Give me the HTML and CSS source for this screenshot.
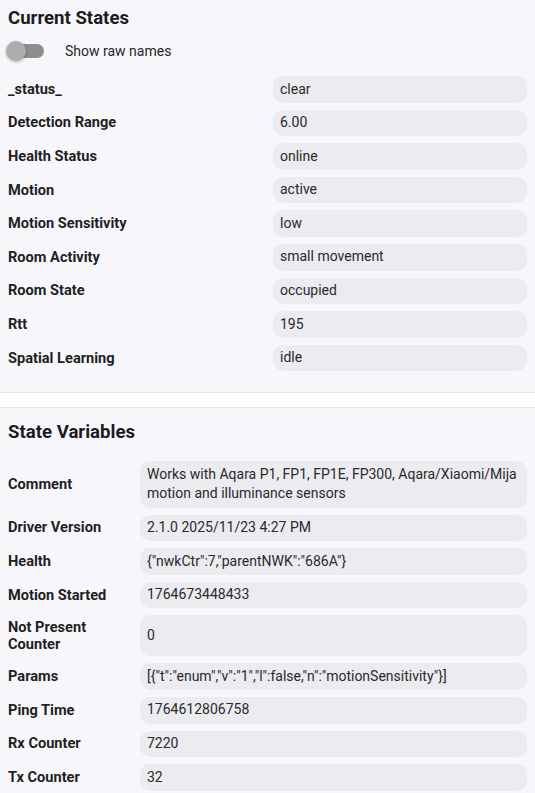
FILE: index.html
```html
<!DOCTYPE html>
<html>
<head>
<meta charset="utf-8">
<link rel="stylesheet" href="styles.css">
</head>
<body>
<section class="panel panel-states">
  <h2 class="title">Current States</h2>
  <div class="toggle-row">
    <span class="switch"><span class="track"></span><span class="knob"></span></span>
    <span class="toggle-label">Show raw names</span>
  </div>
  <div class="grid grid-states">
    <div class="label">_status_</div><div class="value">clear</div>
    <div class="label">Detection Range</div><div class="value">6.00</div>
    <div class="label">Health Status</div><div class="value">online</div>
    <div class="label">Motion</div><div class="value">active</div>
    <div class="label">Motion Sensitivity</div><div class="value">low</div>
    <div class="label">Room Activity</div><div class="value">small movement</div>
    <div class="label">Room State</div><div class="value">occupied</div>
    <div class="label">Rtt</div><div class="value">195</div>
    <div class="label">Spatial Learning</div><div class="value">idle</div>
  </div>
</section>
<div class="spacer"></div>
<section class="panel panel-vars">
  <h2 class="title">State Variables</h2>
  <div class="grid grid-vars">
    <div class="label">Comment</div><div class="value">Works with Aqara P1, FP1, FP1E, FP300, Aqara/Xiaomi/Mija motion and illuminance sensors</div>
    <div class="label">Driver Version</div><div class="value">2.1.0 2025/11/23 4:27 PM</div>
    <div class="label">Health</div><div class="value">{"nwkCtr":7,"parentNWK":"686A"}</div>
    <div class="label">Motion Started</div><div class="value">1764673448433</div>
    <div class="label">Not Present Counter</div><div class="value">0</div>
    <div class="label">Params</div><div class="value">[{"t":"enum","v":"1","l":false,"n":"motionSensitivity"}]</div>
    <div class="label">Ping Time</div><div class="value">1764612806758</div>
    <div class="label">Rx Counter</div><div class="value">7220</div>
    <div class="label">Tx Counter</div><div class="value">32</div>
  </div>
</section>
</body>
</html>
```
FILE: styles.css
```css
html, body {
  margin: 0;
  padding: 0;
  background: #ffffff;
  font-family: Roboto, "Liberation Sans", Arial, sans-serif;
  color: #1f1f1f;
}
.panel {
  background: #f7f7fb;
  padding: 0 8px;
}
.panel-states {
  padding-top: 6px;
  padding-bottom: 21px;
  border-bottom: 1px solid #e6e6ea;
}
.panel-vars {
  border-top: 1px solid #e6e6ea;
  padding-top: 12px;
  padding-bottom: 20px;
}
.spacer {
  height: 14px;
  background: #ffffff;
}
.title {
  margin: 0;
  font-size: 18.6px;
  line-height: 24px;
  font-weight: 700;
  color: #1c1c1c;
}
.panel-vars .title {
  margin-bottom: 17px;
}
.toggle-row {
  display: flex;
  align-items: center;
  height: 30px;
  margin-top: 6px;
  margin-bottom: 10px;
}
.switch {
  position: relative;
  width: 38px;
  height: 20px;
  margin-left: -2px;
  flex: none;
}
.track {
  position: absolute;
  left: 4px;
  top: 3px;
  width: 34px;
  height: 14px;
  border-radius: 7px;
  background: #8e8e8e;
}
.knob {
  position: absolute;
  left: 0;
  top: 0;
  width: 20px;
  height: 20px;
  border-radius: 50%;
  background: #adadad;
  box-shadow: 0 1px 3px rgba(0,0,0,0.3);
}
.toggle-label {
  margin-left: 21px;
  font-size: 14px;
  color: #262626;
}
.grid {
  display: grid;
  column-gap: 8px;
  row-gap: 7px;
  align-items: stretch;
}
.grid-states {
  grid-template-columns: 257px 1fr;
}
.grid-vars {
  grid-template-columns: 124px 1fr;
}
.label {
  display: flex;
  align-items: center;
  font-size: 14.6px;
  line-height: 17px;
  font-weight: 700;
  color: #1f1f1f;
  padding: 3.5px 0;
}
.value {
  display: flex;
  align-items: center;
  background: #ebebf0;
  border-radius: 10px;
  padding: 3.5px 7px;
  font-size: 14px;
  line-height: 19.6px;
  color: #2a2a2a;
  min-height: 19.6px;
}
```
